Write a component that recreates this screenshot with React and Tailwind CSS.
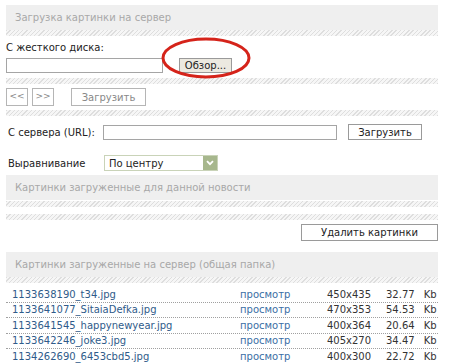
import React from 'react';

const Stripe = ({ className = '' }) => (
  <div
    className={`h-[6px] bg-[repeating-linear-gradient(-45deg,#dedede_0px,#dedede_1px,#f6f6f6_1px,#f6f6f6_3px)] ${className}`}
  />
);

const Header = ({ children, className = '' }) => (
  <div className={`h-[25px] bg-[#efefef] flex items-center pl-[9px] text-[#a8a8a8] text-[10px] ${className}`}>
    {children}
  </div>
);

const files = [
  { name: '1133638190_t34.jpg', dim: '450x435', size: '32.77' },
  { name: '1133641077_SitaiaDefka.jpg', dim: '470x353', size: '54.53' },
  { name: '1133641545_happynewyear.jpg', dim: '400x364', size: '20.64' },
  { name: '1133642246_joke3.jpg', dim: '405x270', size: '34.47' },
  { name: '1134262690_6453cbd5.jpg', dim: '400x300', size: '22.72' },
];

export default function App() {
  return (
    <div className="relative w-[450px] h-[364px] overflow-hidden bg-white text-[10px] text-[#222] font-['DejaVu_Sans',sans-serif]">
      <div className="ml-[6px] w-[432px] overflow-hidden pt-[5px]">
        <Header>Загрузка картинки на сервер</Header>
        <Stripe />

        {/* from disk */}
        <div className="pt-[6px] leading-[12px]">С жесткого диска:</div>
        <div className="flex items-center mt-[4px] h-[15px]">
          <div className="w-[157px] h-[15px] border border-[#a5a5a5] bg-white" />
          <button className="ml-[16px] w-[53px] h-[15px] border border-[#9a9a9a] bg-[#ece9e0] text-[10px] leading-[13px] text-[#222]">
            Обзор...
          </button>
        </div>
        <Stripe className="mt-[5px]" />

        <div className="flex mt-[4px] h-[18px]">
          <button className="w-[22px] h-[18px] border border-[#b5b5b5] bg-white text-[#888] text-[9px]">&lt;&lt;</button>
          <button className="ml-[4px] w-[22px] h-[18px] border border-[#b5b5b5] bg-white text-[#888] text-[9px]">&gt;&gt;</button>
          <button className="ml-[17px] w-[75px] h-[18px] border border-[#b5b5b5] bg-white text-[#888] text-[10px]">Загрузить</button>
        </div>
        <Stripe className="mt-[4px]" />

        {/* from URL */}
        <div className="flex items-center mt-[8px] h-[16px]">
          <span className="w-[97px] pl-[2px]">С сервера (URL):</span>
          <div className="w-[234px] h-[15px] border border-[#a5a5a5] bg-white" />
          <button className="ml-[11px] w-[74px] h-[16px] border border-[#9a9a9a] bg-white text-[10px] text-[#222]">
            Загрузить
          </button>
        </div>

        <div className="flex items-center mt-[15px] h-[16px]">
          <span className="w-[98px] pl-[2px]">Выравнивание</span>
          <div className="w-[114px] h-[16px] border border-[#c9d3b8] bg-white flex items-center">
            <span className="flex-1 pl-[4px]">По центру</span>
            <span className="w-[14px] h-[14px] bg-[#a7b78d] flex items-center justify-center">
              <svg width="8" height="6" viewBox="0 0 8 6">
                <path d="M1 1.2 L4 4.2 L7 1.2" stroke="#fff" strokeWidth="1.8" fill="none" />
              </svg>
            </span>
          </div>
        </div>

        <Header className="mt-[4px]">Картинки загруженные для данной новости</Header>
        <Stripe className="mt-[1px]" />
        <Stripe className="mt-[7px]" />

        <div className="flex justify-end mt-[4px]">
          <button className="w-[137px] h-[17px] border border-[#9a9a9a] bg-white text-[10px] text-[#222]">
            Удалить картинки
          </button>
        </div>

        <Header className="mt-[11px]">Картинки загруженные на сервер (общая папка)</Header>
        <Stripe />

        <div className="mt-[4px]">
          {files.map((f) => (
            <div
              key={f.name}
              className="flex items-center h-[15.5px] border-b border-dotted border-[#a0a0a0] whitespace-nowrap"
            >
              <span className="w-[234px] shrink-0 pl-[6px] text-[#2f5b8a]">{f.name}</span>
              <span className="w-[87px] shrink-0 text-[#3a6ea5]">просмотр</span>
              <span className="w-[59px] shrink-0 text-[#333]">{f.dim}</span>
              <span className="shrink-0 text-[#333]">
                {f.size}
                <span className="ml-[9px]">Kb</span>
              </span>
            </div>
          ))}
        </div>
      </div>

      {/* red highlight ellipse */}
      <svg className="absolute left-[160px] top-[36px]" width="92" height="44" viewBox="0 0 92 44">
        <ellipse cx="46" cy="22" rx="43" ry="19" stroke="#d5231a" strokeWidth="3" fill="none" />
      </svg>
    </div>
  );
}
